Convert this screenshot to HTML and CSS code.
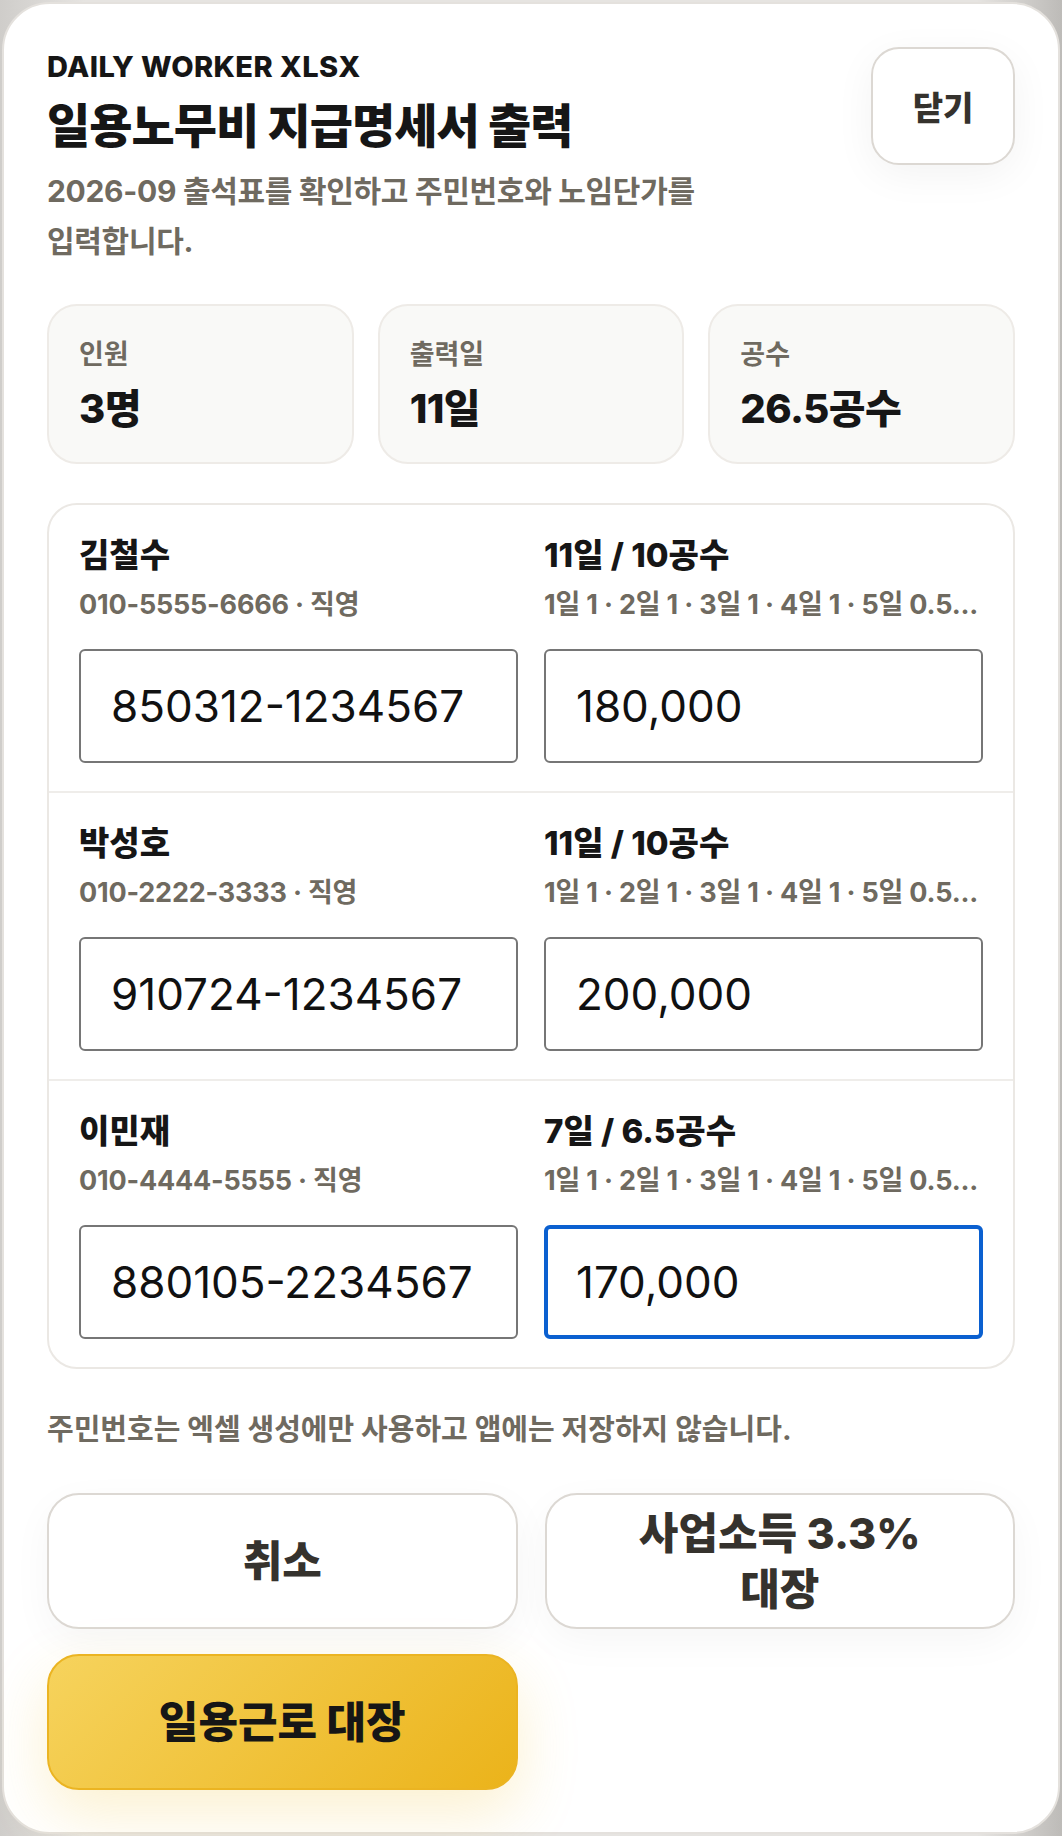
FILE: index.html
```html
<!DOCTYPE html>
<html lang="ko">
<head>
<meta charset="utf-8">
<title>일용노무비 지급명세서 출력</title>
<link rel="stylesheet" href="styles.css">
</head>
<body>
<div class="sheet">
  <header class="head">
    <div class="head-text">
      <div class="eyebrow">DAILY WORKER XLSX</div>
      <h1 class="title">일용노무비 지급명세서 출력</h1>
      <p class="desc">2026-09 출석표를 확인하고 주민번호와 노임단가를 입력합니다.</p>
    </div>
    <button class="close">닫기</button>
  </header>

  <section class="stats">
    <div class="stat">
      <div class="stat-label">인원</div>
      <div class="stat-value">3명</div>
    </div>
    <div class="stat">
      <div class="stat-label">출력일</div>
      <div class="stat-value">11일</div>
    </div>
    <div class="stat">
      <div class="stat-label">공수</div>
      <div class="stat-value">26.5공수</div>
    </div>
  </section>

  <section class="workers">
    <div class="row">
      <div class="col">
        <div class="name">김철수</div>
        <div class="sub">010-5555-6666 · 직영</div>
        <input class="field" type="text" value="850312-1234567">
      </div>
      <div class="col">
        <div class="name">11일 / 10공수</div>
        <div class="sub">1일 1 · 2일 1 · 3일 1 · 4일 1 · 5일 0.5...</div>
        <input class="field" type="text" value="180,000">
      </div>
    </div>
    <div class="row">
      <div class="col">
        <div class="name">박성호</div>
        <div class="sub">010-2222-3333 · 직영</div>
        <input class="field" type="text" value="910724-1234567">
      </div>
      <div class="col">
        <div class="name">11일 / 10공수</div>
        <div class="sub">1일 1 · 2일 1 · 3일 1 · 4일 1 · 5일 0.5...</div>
        <input class="field" type="text" value="200,000">
      </div>
    </div>
    <div class="row">
      <div class="col">
        <div class="name">이민재</div>
        <div class="sub">010-4444-5555 · 직영</div>
        <input class="field" type="text" value="880105-2234567">
      </div>
      <div class="col">
        <div class="name">7일 / 6.5공수</div>
        <div class="sub">1일 1 · 2일 1 · 3일 1 · 4일 1 · 5일 0.5...</div>
        <input class="field focused" type="text" value="170,000">
      </div>
    </div>
  </section>

  <p class="note">주민번호는 엑셀 생성에만 사용하고 앱에는 저장하지 않습니다.</p>

  <section class="actions">
    <button class="btn">취소</button>
    <button class="btn"><span class="narrow">사업소득 3.3% 대장</span></button>
    <button class="btn btn-primary">일용근로 대장</button>
  </section>
</div>
</body>
</html>
```

FILE: styles.css
```css
* { box-sizing: border-box; }

html, body {
  margin: 0;
  padding: 0;
}

body {
  background: linear-gradient(90deg, #cfcdca 0%, #e6e4e1 8%, #e6e4e1 92%, #bdbbb8 100%);
  font-family: Inter, "Noto Sans CJK KR", sans-serif;
  color: #161616;
  padding: 2px;
  word-break: keep-all;
}

.sheet {
  width: 1058px;
  height: 1832px;
  background: #ffffff;
  border: 2px solid #e4e1dd;
  border-radius: 48px;
  padding: 43px 43px 43px;
}

.head {
  display: flex;
  justify-content: space-between;
  align-items: flex-start;
}

.eyebrow {
  font-size: 29px;
  line-height: 40px;
  font-weight: 800;
  letter-spacing: 0.4px;
}

.title {
  margin: 12px 0 0;
  font-size: 47px;
  line-height: 54px;
  font-weight: 800;
  letter-spacing: -1px;
}

.desc {
  margin: 13px 0 0;
  max-width: 700px;
  font-size: 30px;
  line-height: 50px;
  font-weight: 700;
  color: #6f6a60;
  letter-spacing: -0.3px;
}

.close {
  width: 144px;
  height: 118px;
  border: 2px solid #dcd8d3;
  border-radius: 28px;
  background: #fff;
  font-family: inherit;
  font-size: 33px;
  font-weight: 800;
  color: #35322d;
  box-shadow: 0 10px 40px rgba(0, 0, 0, 0.05);
}

.stats {
  display: grid;
  grid-template-columns: repeat(3, 1fr);
  gap: 24px;
  margin-top: 38px;
}

.stat {
  height: 160px;
  background: #f9f9f7;
  border: 2px solid #eeebe7;
  border-radius: 30px;
  padding: 32px 30px 0;
}

.stat-label {
  font-size: 27px;
  line-height: 34px;
  font-weight: 700;
  color: #6f6a60;
}

.stat-value {
  margin-top: 13px;
  font-size: 40px;
  line-height: 48px;
  font-weight: 800;
  letter-spacing: -0.6px;
}

.workers {
  margin-top: 39px;
  border: 2px solid #ebe8e4;
  border-radius: 30px;
  overflow: hidden;
}

.row {
  display: grid;
  grid-template-columns: 1fr 1fr;
  column-gap: 26px;
  padding: 30px 30px 28px;
}

.row + .row {
  border-top: 2px solid #efedea;
}

.col {
  display: flex;
  flex-direction: column;
  min-width: 0;
}

.name {
  font-size: 33px;
  line-height: 40px;
  font-weight: 800;
}

.sub {
  margin-top: 13px;
  font-size: 27px;
  line-height: 34px;
  font-weight: 700;
  color: #6f6a60;
  white-space: nowrap;
  overflow: hidden;
  text-overflow: ellipsis;
  letter-spacing: -0.2px;
}

.field {
  display: block;
  width: 100%;
  height: 114px;
  margin-top: 27px;
  padding: 0 30px;
  border: 2px solid #767676;
  border-radius: 6px;
  background: #fff;
  font-family: Inter, "Noto Sans CJK KR", sans-serif;
  font-size: 44px;
  font-weight: 400;
  color: #111;
  outline: none;
}

.field.focused {
  border: 4px solid #0b60d0;
  padding-left: 28px;
}

.note {
  margin: 43px 0 0;
  font-size: 29px;
  line-height: 36px;
  font-weight: 700;
  color: #6f6a60;
}

.actions {
  display: grid;
  grid-template-columns: 1fr 1fr;
  gap: 25px 27px;
  margin-top: 45px;
}

.btn {
  height: 136px;
  border: 2px solid #dcd8d3;
  border-radius: 32px;
  background: #fff;
  font-family: inherit;
  font-size: 43px;
  line-height: 56px;
  font-weight: 800;
  color: #35322d;
  box-shadow: 0 12px 40px rgba(0, 0, 0, 0.04);
}

.narrow {
  display: inline-block;
  max-width: 320px;
}

.btn-primary {
  background: linear-gradient(135deg, #f6d35d 0%, #ebb31a 100%);
  border-color: #ebb422;
  color: #161616;
  box-shadow: 0 24px 60px rgba(240, 190, 40, 0.22);
}
```
